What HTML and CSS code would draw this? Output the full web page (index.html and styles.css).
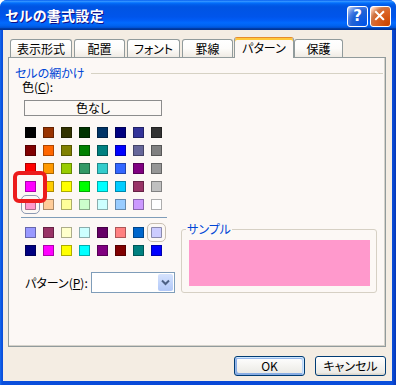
FILE: index.html
```html
<!DOCTYPE html>
<html lang="ja">
<head>
<meta charset="utf-8">
<title>セルの書式設定</title>
<link rel="stylesheet" href="styles.css">
</head>
<body>
<div class="window">
  <div class="titlebar">
    <span class="title">セルの書式設定</span>
    <div class="title-controls">
      <span class="tbtn help">?</span>
      <span class="tbtn close"><svg viewBox="0 0 21 21" width="19" height="19"><path d="M5.5 5.5 L13.5 13.5 M13.5 5.5 L5.5 13.5" stroke="#fff" stroke-width="2.2" stroke-linecap="square" fill="none"/></svg></span>
    </div>
  </div>
  <div class="client">
    <div class="tabs">
      <div class="tab w62">表示形式</div>
      <div class="tab w51">配置</div>
      <div class="tab w53">フォント</div>
      <div class="tab w51">罫線</div>
      <div class="tab active">パターン</div>
      <div class="tab w49 after-active">保護</div>
    </div>
    <div class="panel">
      <div class="group-head"><span>セルの網かけ</span><i class="rule"></i></div>
      <div class="panel-body">
        <div class="left">
          <div class="label"><span class="txt">色(<span class="ul">C</span>):</span></div>
          <div class="nocolor">色なし</div>
          <div class="swatches">
            <span class="sw" style="background:#000000"></span>
            <span class="sw" style="background:#993300"></span>
            <span class="sw" style="background:#333300"></span>
            <span class="sw" style="background:#003300"></span>
            <span class="sw" style="background:#003366"></span>
            <span class="sw" style="background:#000080"></span>
            <span class="sw" style="background:#333399"></span>
            <span class="sw" style="background:#333333"></span>
            <span class="sw" style="background:#800000"></span>
            <span class="sw" style="background:#FF6600"></span>
            <span class="sw" style="background:#808000"></span>
            <span class="sw" style="background:#008000"></span>
            <span class="sw" style="background:#008080"></span>
            <span class="sw" style="background:#0000FF"></span>
            <span class="sw" style="background:#666699"></span>
            <span class="sw" style="background:#808080"></span>
            <span class="sw" style="background:#FF0000"></span>
            <span class="sw" style="background:#FF9900"></span>
            <span class="sw" style="background:#99CC00"></span>
            <span class="sw" style="background:#339966"></span>
            <span class="sw" style="background:#33CCCC"></span>
            <span class="sw" style="background:#3366FF"></span>
            <span class="sw" style="background:#800080"></span>
            <span class="sw" style="background:#969696"></span>
            <span class="sw" style="background:#FF00FF"></span>
            <span class="sw" style="background:#FFCC00"></span>
            <span class="sw" style="background:#FFFF00"></span>
            <span class="sw" style="background:#00FF00"></span>
            <span class="sw" style="background:#00FFFF"></span>
            <span class="sw" style="background:#00CCFF"></span>
            <span class="sw" style="background:#993366"></span>
            <span class="sw" style="background:#C0C0C0"></span>
            <span class="sw selected" style="background:#FF99CC"></span>
            <span class="sw" style="background:#FFCC99"></span>
            <span class="sw" style="background:#FFFF99"></span>
            <span class="sw" style="background:#CCFFCC"></span>
            <span class="sw" style="background:#CCFFFF"></span>
            <span class="sw" style="background:#99CCFF"></span>
            <span class="sw" style="background:#CC99FF"></span>
            <span class="sw" style="background:#FFFFFF"></span>
            <div class="mark"></div>
          </div>
          <div class="sep"></div>
          <div class="swatches extra">
            <span class="sw" style="background:#9999FF"></span>
            <span class="sw" style="background:#993366"></span>
            <span class="sw" style="background:#FFFFCC"></span>
            <span class="sw" style="background:#CCFFFF"></span>
            <span class="sw" style="background:#660066"></span>
            <span class="sw" style="background:#FF8080"></span>
            <span class="sw" style="background:#0066CC"></span>
            <span class="sw hover" style="background:#CCCCFF"></span>
            <span class="sw" style="background:#000080"></span>
            <span class="sw" style="background:#FF00FF"></span>
            <span class="sw" style="background:#FFFF00"></span>
            <span class="sw" style="background:#00FFFF"></span>
            <span class="sw" style="background:#800080"></span>
            <span class="sw" style="background:#800000"></span>
            <span class="sw" style="background:#008080"></span>
            <span class="sw" style="background:#0000FF"></span>
          </div>
          <div class="pattern-row">
            <span class="pattern-label">パターン(<span class="ul">P</span>):</span>
            <div class="combo">
              <span class="combo-btn"><svg viewBox="0 0 15 17" width="15" height="17"><path d="M4 6.5 L7.5 10 L11 6.5" stroke="#4d6185" stroke-width="2" fill="none"/></svg></span>
            </div>
          </div>
        </div>
        <fieldset class="sample">
          <legend>サンプル</legend>
          <div class="sample-fill"></div>
        </fieldset>
      </div>
    </div>
    <div class="actions">
      <button class="btn default">OK</button>
      <button class="btn">キャンセル</button>
    </div>
  </div>
</div>
</body>
</html>
```

FILE: styles.css
```css
* { box-sizing: border-box; }
html, body { margin: 0; padding: 0; background: #ffffff; }
body {
  font-family: "Noto Sans CJK JP", "Noto Sans", sans-serif;
  font-size: 12px;
  font-feature-settings: "palt";
  color: #000;
}
.window {
  width: 396px;
  height: 385px;
  display: flex;
  flex-direction: column;
  background: linear-gradient(90deg, #166aee 0, #0a4fdc 2px, #0847d6 50%, #0a4fdc 99%, #0636b8 100%);
  border-radius: 7px 7px 0 0;
  overflow: hidden;
}
.titlebar {
  height: 30px;
  flex: none;
  display: flex;
  align-items: center;
  justify-content: space-between;
  padding: 0 5px 0 5px;
  background: linear-gradient(180deg, #0058ee 0%, #3593ff 4%, #288eff 6%, #127dff 8%, #036ffc 10%, #0262ee 14%, #0057e5 20%, #0054e3 24%, #0055eb 56%, #005bf5 66%, #026afe 76%, #0062ef 86%, #0052d6 92%, #0040ab 94%, #003092 100%);
}
.title {
  color: #fff;
  font-weight: bold;
  font-size: 14px;
  line-height: 16px;
  text-shadow: 1px 1px #0f1089;
  letter-spacing: 0.3px;
}
.title-controls {
  display: flex;
  gap: 2px;
  margin-top: 3px;
}
.tbtn {
  width: 21px;
  height: 21px;
  border: 1px solid #fff;
  border-radius: 3px;
  display: flex;
  align-items: center;
  justify-content: center;
  color: #fff;
  font-family: "DejaVu Sans", sans-serif;
  font-weight: bold;
  font-size: 15px;
  line-height: 1;
}
.help {
  background: radial-gradient(circle at 90% 90%, #0054e9 0%, #2263d5 55%, #4479e4 70%, #a3bbec 90%, #fff 100%);
}
.close {
  background: radial-gradient(circle at 90% 90%, #cc4600 0%, #dc6527 55%, #cd7546 70%, #ffccb2 90%, #fff 100%);
}
.client {
  flex: 1;
  margin: 0 4px 4px 3px;
  background: #f4ede3;
  padding: 7px 6px 5px 5px;
  display: flex;
  flex-direction: column;
}
.tabs {
  display: flex;
  align-items: flex-end;
  height: 20px;
  gap: 2px;
  padding-left: 2px;
  position: relative;
  z-index: 1;
}
.tab {
  height: 18px;
  border: 1px solid #919b9c;
  border-bottom: none;
  border-radius: 3px 3px 0 0;
  background: linear-gradient(180deg, #ffffff 0%, #fdfcfa 50%, #efebe4 100%);
  text-align: center;
  line-height: 17px;
  white-space: nowrap;
}
.w62 { width: 62px; }
.w51 { width: 51px; }
.w53 { width: 53px; }
.w49 { width: 49px; }
.tab.active {
  width: 60px;
  height: 21px;
  margin-left: -1px;
  margin-bottom: -1px;
  background: #fcf8f5;
  border-top: 1px solid #e68b2c;
  box-shadow: inset 0 2px 0 #ffc83c;
  line-height: 19px;
}
.tab.after-active { margin-left: -2px; }
.panel {
  width: 378px;
  height: 290px;
  border: 1px solid #919b9c;
  background: #fcf8f5;
  box-shadow: inset -1px -1px 0 #d5d2ca;
  position: relative;
}
.group-head {
  display: flex;
  align-items: center;
  height: 14px;
  margin: 8px 2px 0 6px;
  color: #0046d5;
  line-height: 14px;
}
.group-head .rule {
  flex: 1;
  height: 1px;
  background: #d6d2c4;
  margin-left: 6px;
}
.panel-body {
  display: flex;
  align-items: flex-end;
}
.left {
  width: 166px;
  display: flex;
  flex-direction: column;
  align-items: flex-start;
}
.ul { text-decoration: underline; }
.label {
  margin-left: 13px;
  line-height: 14px;
  height: 14px;
  font-feature-settings: normal;
}
.nocolor {
  margin: 6px 0 0 15px;
  width: 138px;
  height: 16px;
  border: 1px solid #8c8c8c;
  line-height: 14px;
  text-align: center;
}
.swatches {
  position: relative;
  margin: 11px 0 0 16px;
  display: grid;
  grid-template-columns: repeat(8, 11px);
  grid-auto-rows: 11px;
  gap: 7px;
}
.swatches.extra { margin-top: 9px; }
.sw {
  display: block;
  width: 11px;
  height: 11px;
  box-shadow: inset 0 0 0 1px rgba(0, 0, 0, 0.32);
}
.sw.selected {
  border-radius: 1px;
  outline: 1px solid #8d9ab3;
  outline-offset: 3px;
}
.sw.hover {
  border-radius: 1px;
  outline: 1px solid #c8bfb2;
  outline-offset: 3px;
}
.mark {
  position: absolute;
  left: -12px;
  top: 44px;
  width: 34px;
  height: 32px;
  border: 4px solid #ec1c1c;
  border-radius: 6px;
}
.sep {
  margin: 7px 0 0 12px;
  width: 146px;
  height: 1px;
  background: #7f9db9;
}
.pattern-row {
  margin: 16px 0 0 16px;
  display: flex;
  align-items: center;
}
.pattern-label {
  width: 66px;
  line-height: 14px;
  white-space: nowrap;
}
.combo {
  width: 84px;
  height: 21px;
  border: 1px solid #7f9db9;
  background: #fff;
  display: flex;
  justify-content: flex-end;
  padding: 1px;
}
.combo-btn {
  width: 15px;
  height: 17px;
  border-radius: 2px;
  background: linear-gradient(180deg, #d6e3fd 0%, #c3d5fb 50%, #b2c8f7 100%);
  display: block;
}
.combo-btn svg { display: block; }
.sample {
  margin: 0 0 0 6px;
  width: 196px;
  min-width: 0;
  padding: 4px 6px 6px 7px;
  border: 1px solid #d6d0c4;
  border-radius: 3px;
}
.sample legend {
  color: #0046d5;
  padding: 0 1px;
  margin-left: -3px;
  line-height: 14px;
}
.sample-fill {
  height: 46px;
  background: #ff99cc;
}
.actions {
  display: flex;
  justify-content: flex-end;
  gap: 10px;
  margin-top: 9px;
}
.btn {
  width: 71px;
  height: 20px;
  padding: 0;
  font: inherit;
  font-size: 12px;
  line-height: 16px;
  color: #000;
  border: 1px solid #003c74;
  border-radius: 3px;
  background: linear-gradient(180deg, #ffffff 0%, #ecebe6 86%, #d6d0c5 100%);
}
.btn.default {
  box-shadow: inset -1px 1px #cee7ff, inset 1px 2px #98b8ea, inset -2px 2px #bcd4f6, inset 1px -1px #89ade4, inset 2px -2px #89ade4;
}
```
